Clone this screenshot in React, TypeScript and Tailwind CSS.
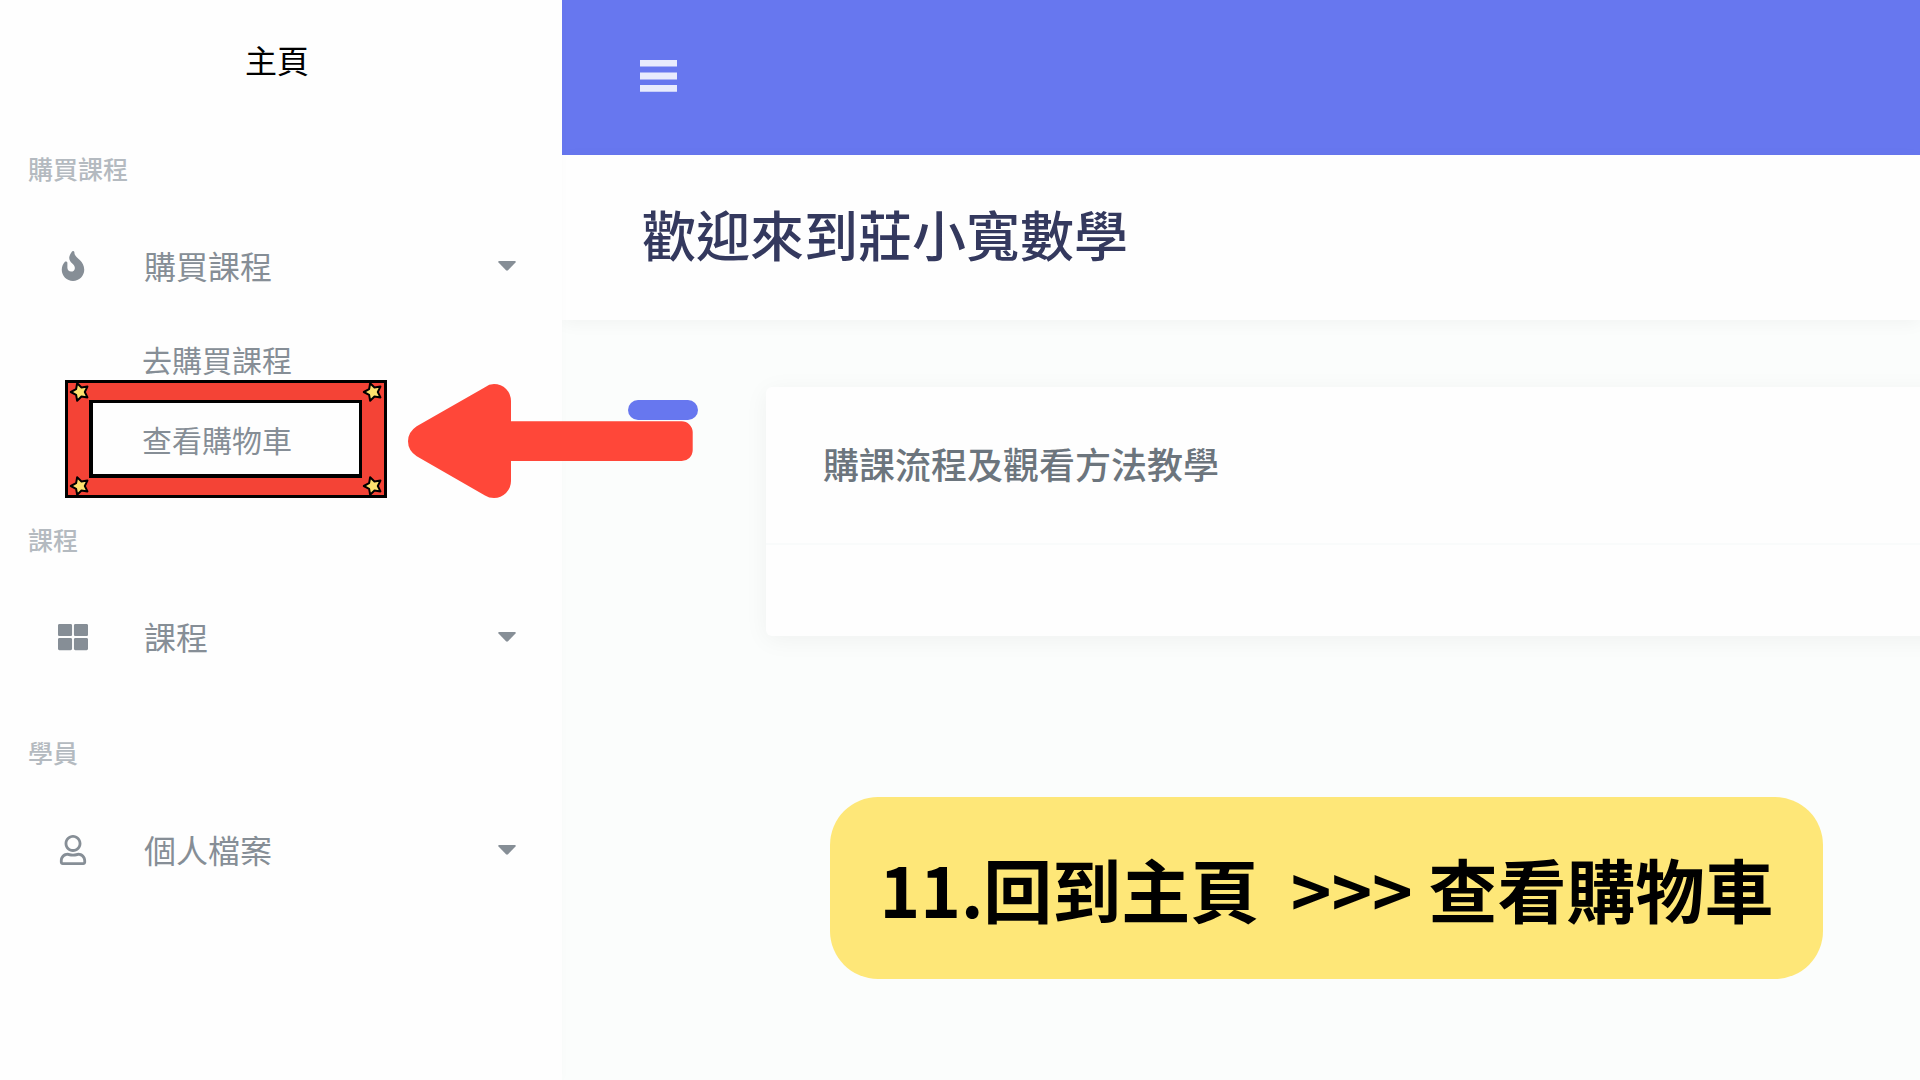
import { useState } from 'react';
import type { IconType } from 'react-icons';
import { FaFire, FaRegUser, FaThLarge } from 'react-icons/fa';

interface MenuSection {
  label: string;
  title: string;
  icon: IconType;
  links: { text: string; highlighted?: boolean }[];
}

const SECTIONS: MenuSection[] = [
  {
    label: '購買課程',
    title: '購買課程',
    icon: FaFire,
    links: [{ text: '去購買課程' }, { text: '查看購物車', highlighted: true }],
  },
  { label: '課程', title: '課程', icon: FaThLarge, links: [] },
  { label: '學員', title: '個人檔案', icon: FaRegUser, links: [] },
];

const STAR_CENTERS = [
  [15, 12],
  [308, 12],
  [15, 106],
  [308, 106],
];

function starPoints(cx: number, cy: number) {
  return Array.from({ length: 10 }, (_, i) => {
    const r = i % 2 === 0 ? 9.2 : 4.8;
    const angle = Math.PI + (i * Math.PI) / 5;
    return `${(cx + r * Math.cos(angle)).toFixed(2)},${(cy + r * Math.sin(angle)).toFixed(2)}`;
  }).join(' ');
}

function MenuBars() {
  return (
    <svg viewBox="0 0 37 32" className="w-[37px] h-8 fill-current" aria-hidden="true">
      <path d="M0 0h37v6.6H0zM0 12.4h37v7H0zM0 25h37v6.8H0z" />
    </svg>
  );
}

function Caret() {
  return (
    <svg viewBox="0 0 18 10" className="w-[18px] h-[10px] fill-current" aria-hidden="true">
      <path d="M1 0h16q1.2.4.5 1.4L10 9.3q-1 .9-2 0L.5 1.4Q-.2.4 1 0z" />
    </svg>
  );
}

// Red picture frame with a star in each corner
function StarFrame() {
  return (
    <svg
      viewBox="0 0 322 118"
      className="absolute left-[65px] -top-5 w-[322px] h-[118px] pointer-events-none"
      aria-hidden="true"
    >
      <path fillRule="evenodd" fill="#000" d="M0 0h322v118H0zM28 23v71h266V23z" />
      <path fillRule="evenodd" fill="#f44336" d="M3 3h316v112H3zM24 20v78h273V20z" />
      {STAR_CENTERS.map(([cx, cy]) => (
        <polygon
          key={`${cx}-${cy}`}
          points={starPoints(cx, cy)}
          fill="#fee26f"
          stroke="#000"
          strokeWidth="2"
          strokeLinejoin="round"
        />
      ))}
    </svg>
  );
}

function Arrow() {
  return (
    <svg
      viewBox="0 0 285 114"
      className="absolute left-[408px] -top-4 w-[285px] h-[114px] pointer-events-none z-10"
      aria-hidden="true"
    >
      <path
        fill="#ff4739"
        d="M8.7 42.3 77 3.2Q81 0 86 0A17 17 0 0 1 103 17.3V37.3H273.7A11 11 0 0 1 284.7 48V66.3A11 11 0 0 1 273.7 77H103V97A17 17 0 0 1 86 114Q81 114 77 111.5L8.7 72.3Q0 66.5 0 57.3T8.7 42.3z"
      />
    </svg>
  );
}

function SidebarSection({ section }: { section: MenuSection }) {
  const [open, setOpen] = useState(true);
  const Icon = section.icon;

  return (
    <section className="mb-[45px]">
      <h2 className="h-12 mb-6 px-7 pb-1 flex items-center text-[25px] leading-none font-medium text-[#b4bac0]">
        {section.label}
      </h2>
      <button
        type="button"
        aria-expanded={open}
        onClick={() => setOpen(!open)}
        className="w-full h-24 pl-[56px] pr-[46px] flex items-center text-[32px] leading-none"
      >
        <span className="w-[34px] mr-[54px] flex justify-center">
          <Icon className="w-[30px] h-[30px]" />
        </span>
        <span className="pb-[2px]">{section.title}</span>
        <span className="ml-auto">
          <Caret />
        </span>
      </button>
      {open && section.links.length > 0 && (
        <ul className="pt-[6px] -mb-2">
          {section.links.map((link) => (
            <li key={link.text} className="relative">
              <a href="#" className="h-20 pl-[142px] pb-[2px] flex items-center text-[30px] leading-none">
                {link.text}
              </a>
              {link.highlighted && (
                <>
                  <StarFrame />
                  <Arrow />
                </>
              )}
            </li>
          ))}
        </ul>
      )}
    </section>
  );
}

export default function App() {
  return (
    <div className="flex min-h-screen overflow-x-hidden bg-[#fbfdfc] font-['Noto_Sans_CJK_TC',sans-serif]">
      {/* Sidebar */}
      <aside className="relative z-10 w-[562px] shrink-0 bg-[#fefefe] text-[#868e96] shadow-[0_0_10px_rgba(0,0,0,0.02)]">
        <a href="#" className="h-[122px] mb-6 pr-2 pb-1 flex items-center justify-center text-[32px] leading-none text-black">
          主頁
        </a>
        <nav>
          {SECTIONS.map((section) => (
            <SidebarSection key={section.label} section={section} />
          ))}
        </nav>
      </aside>

      <div className="flex-1 min-w-0 flex flex-col">
        {/* Top bar */}
        <header className="h-[155px] px-[78px] pb-1 flex items-center bg-[#6777ef]">
          <button type="button" aria-label="選單" className="text-white/85">
            <MenuBars />
          </button>
        </header>

        <div className="h-[165px] px-20 pb-2 flex items-center bg-[#fefefe] shadow-[0_4px_16px_rgba(0,0,0,0.04)]">
          <h1 className="text-[54px] leading-none font-medium text-[#34395e]">歡迎來到莊小寬數學</h1>
        </div>

        {/* Course card */}
        <main className="pt-[67px] flex flex-col">
          <div className="pl-[66px] flex items-start">
            <span className="w-[70px] h-5 mt-[13px] mr-[68px] rounded-full bg-[#6777ef]" />
            <article className="flex-1 -mr-10 rounded-md bg-[#fefefe] shadow-[0_4px_25px_rgba(0,0,0,0.05)]">
              <h2 className="h-[158px] px-[57px] pb-1 flex items-center text-[36px] leading-none font-medium text-[#6c757d] border-b-2 border-[#f9fbfb]">
                購課流程及觀看方法教學
              </h2>
              <div className="h-[91px]" />
            </article>
          </div>

          <p className="mt-[161px] ml-[268px] mr-[97px] h-[182px] flex items-center justify-center rounded-[48px] bg-[#fee778] text-[69px] leading-none font-bold text-black whitespace-pre">
            {'11.回到主頁  >>> 查看購物車'}
          </p>
        </main>
      </div>
    </div>
  );
}
